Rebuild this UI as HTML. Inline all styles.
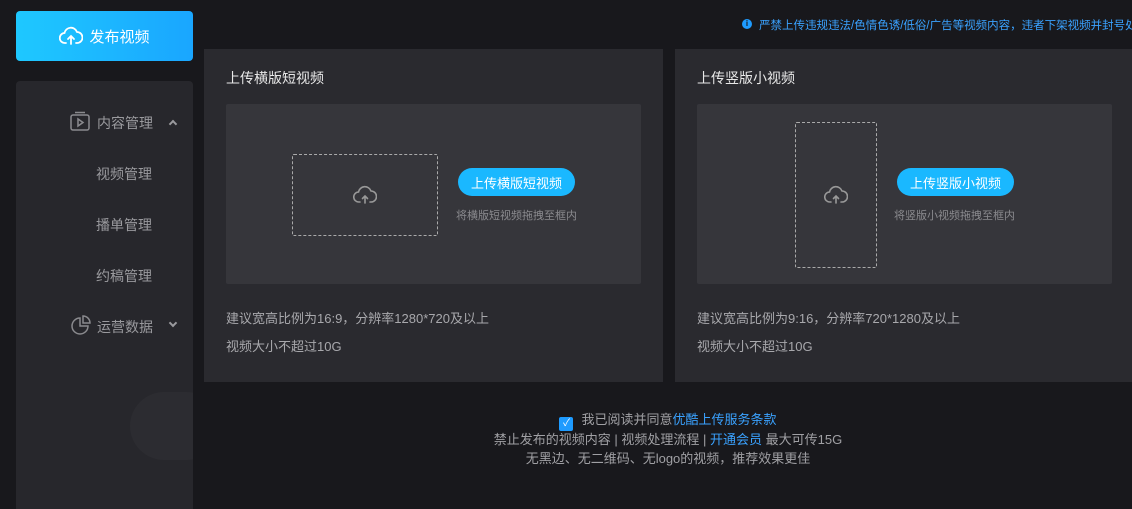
<!DOCTYPE html>
<html><head><meta charset="utf-8"><style>
*{margin:0;padding:0;box-sizing:border-box}
body{width:1132px;height:509px;background:#18181c;font-family:"Liberation Sans","Noto Sans CJK SC",sans-serif;position:relative;overflow:hidden;color:#ddd}
.abs{position:absolute}
.pub{left:16px;top:11px;width:177px;height:50px;border-radius:4px;background:linear-gradient(90deg,#1ec8ff,#1aa6ff);color:#fff;font-size:15px;display:flex;align-items:center;justify-content:center;gap:6px}
.side{left:16px;top:81px;width:177px;height:428px;border-radius:4px 4px 0 0;background:#27272c;overflow:hidden}
.nav{position:absolute;font-size:14px;color:#9a9a9e}
.card{top:49px;height:333px;background:#2a2a2f}
.card h3{position:absolute;left:22px;top:19px;font-size:14px;font-weight:normal;color:#e8e8e8}
.drop{position:absolute;left:22px;top:55px;width:415px;height:180px;background:#36363b;border-radius:2px}
.dash{position:absolute;border:1px dashed #aaa;border-radius:2px;display:flex;align-items:center;justify-content:center}
.btn{position:absolute;height:28px;border-radius:14px;background:#1ab8ff;color:#fff;font-size:13px;display:flex;align-items:center;justify-content:center}
.hint{position:absolute;font-size:11px;color:#8a8a8e}
.info{position:absolute;left:22px;font-size:13px;color:#a8a8ac}
.bot{position:absolute;left:204px;width:928px;text-align:center;font-size:13px;color:#a0a0a4}
.chev{position:absolute;width:6px;height:6px;border-left:2px solid #9a9a9e;border-top:2px solid #9a9a9e}
</style></head><body>
<div class="abs pub"><svg width="24" height="20" viewBox="0 0 24 20" fill="none" stroke="#fff" stroke-width="1.8" stroke-linecap="round"><path d="M7 17H6a5 5 0 0 1-.5-10A6.5 6.5 0 0 1 18 6a5 5 0 0 1 0 11h-1"/><path d="M12 18V10M9 13l3-3 3 3"/></svg>发布视频</div>
<div class="abs side">
<div class="abs" style="left:114px;top:311px;width:90px;height:68px;border-radius:34px;background:#2c2c31"></div>
<svg class="abs" style="left:54px;top:30px" width="20" height="20" viewBox="0 0 20 20" fill="none" stroke="#8a8a8e" stroke-width="1.5"><path d="M5 1.5h10"/><rect x="1" y="4" width="18" height="15" rx="2"/><path d="M8 8v7l5-3.5z"/></svg>
<div class="nav" style="left:81px;top:32px">内容管理</div>
<div class="chev" style="left:154px;top:40px;transform:rotate(45deg)"></div>
<div class="nav" style="left:80px;top:83px">视频管理</div>
<div class="nav" style="left:80px;top:134px">播单管理</div>
<div class="nav" style="left:80px;top:185px">约稿管理</div>
<svg class="abs" style="left:55px;top:234px" width="20" height="20" viewBox="0 0 20 20" fill="none" stroke="#8a8a8e" stroke-width="1.5"><path d="M9 3a8 8 0 1 0 8 8H9z"/><path d="M12 1v7h7a7 7 0 0 0-7-7z"/></svg>
<div class="nav" style="left:81px;top:236px">运营数据</div>
<div class="chev" style="left:154px;top:239px;transform:rotate(225deg)"></div>
</div>
<div class="abs" style="left:742px;top:19px;width:10px;height:10px;border-radius:5px;background:#1e9bff;color:#18181c;font-size:8px;text-align:center;line-height:10px;font-weight:bold">i</div>
<div class="abs" style="left:759px;top:17px;font-size:11.5px;color:#3aa2ff;white-space:nowrap">严禁上传违规违法/色情色诱/低俗/广告等视频内容，违者下架视频并封号处理</div>

<div class="abs card" style="left:204px;width:459px">
<h3>上传横版短视频</h3>
<div class="drop">
<div class="dash" style="left:66px;top:50px;width:146px;height:82px"><svg width="24" height="20" viewBox="0 0 24 20" fill="none" stroke="#999" stroke-width="1.6" stroke-linecap="round"><path d="M7 17H6a5 5 0 0 1-.5-10A6.5 6.5 0 0 1 18 6a5 5 0 0 1 0 11h-1"/><path d="M12 18V11M9.5 13.5 12 11l2.5 2.5"/></svg></div>
<div class="btn" style="left:232px;top:64px;width:117px">上传横版短视频</div>
<div class="hint" style="left:230px;top:103px">将横版短视频拖拽至框内</div>
</div>
<div class="info" style="top:259px">建议宽高比例为16:9，分辨率1280*720及以上</div>
<div class="info" style="top:287px">视频大小不超过10G</div>
</div>

<div class="abs card" style="left:675px;width:457px">
<h3>上传竖版小视频</h3>
<div class="drop" style="width:415px">
<div class="dash" style="left:98px;top:18px;width:82px;height:146px"><svg width="24" height="20" viewBox="0 0 24 20" fill="none" stroke="#999" stroke-width="1.6" stroke-linecap="round"><path d="M7 17H6a5 5 0 0 1-.5-10A6.5 6.5 0 0 1 18 6a5 5 0 0 1 0 11h-1"/><path d="M12 18V11M9.5 13.5 12 11l2.5 2.5"/></svg></div>
<div class="btn" style="left:200px;top:64px;width:117px">上传竖版小视频</div>
<div class="hint" style="left:197px;top:103px">将竖版小视频拖拽至框内</div>
</div>
<div class="info" style="top:259px">建议宽高比例为9:16，分辨率720*1280及以上</div>
<div class="info" style="top:287px">视频大小不超过10G</div>
</div>

<div class="bot" style="top:409px"><span style="display:inline-block;width:14px;height:14px;background:#1e9bff;border-radius:2px;color:#fff;font-size:10px;line-height:14px;vertical-align:-2px;margin-right:8px">✓</span>我已阅读并同意<span style="color:#3aa2ff">优酷上传服务条款</span></div>
<div class="bot" style="top:429px">禁止发布的视频内容 | 视频处理流程 | <span style="color:#3aa2ff">开通会员</span> 最大可传15G</div>
<div class="bot" style="top:448px">无黑边、无二维码、无logo的视频，推荐效果更佳</div>
</body></html>
